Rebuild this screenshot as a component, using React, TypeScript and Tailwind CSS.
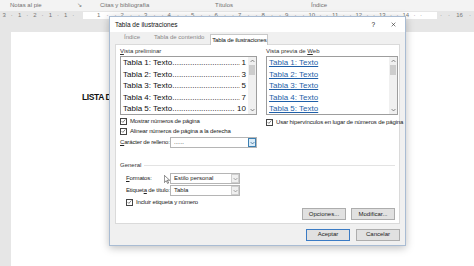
const font = "font-['Liberation_Sans',sans-serif]";

const Check = () => (
  <span className="flex h-[7px] w-[7px] shrink-0 items-center justify-center border border-[#444] bg-white">
    <svg viewBox="0 0 8 8" className="h-[6px] w-[6px]">
      <path d="M1 4.2 3 6.2 7 1.5" fill="none" stroke="#222" strokeWidth="0.9" />
    </svg>
  </span>
);

const CheckRow = ({ label }: { label: string }) => (
  <div className="flex h-[10px] items-center gap-[3px] whitespace-nowrap text-[6px] tracking-[-0.15px] text-[#222]">
    <Check />
    <span>{label}</span>
  </div>
);

const Chevron = ({ down, color = '#606060' }: { down?: boolean; color?: string }) => (
  <svg viewBox="0 0 8 6" className="h-[4px] w-[5px]">
    <path
      d={down ? 'M1 1.5 4 4.5 7 1.5' : 'M1 4.5 4 1.5 7 4.5'}
      fill="none"
      stroke={color}
      strokeWidth="1.2"
    />
  </svg>
);

const Scroll = () => (
  <div className="flex w-[8px] shrink-0 flex-col items-center bg-[#f0f0f0] pt-[2px] pb-[2px]">
    <Chevron />
    <div className="mt-[2px] h-[10px] w-[6px] bg-[#cdcdcd]" />
    <div className="flex-1" />
    <Chevron down />
  </div>
);

const Select = ({
  value,
  width,
  active,
}: {
  value: string;
  width: string;
  active?: boolean;
}) => (
  <div className={`flex h-[11px] items-stretch border border-[#b5b5b5] bg-white ${width}`}>
    <span className="flex-1 whitespace-nowrap pl-[3px] text-[6px] leading-[9px] text-[#222]">
      {value}
    </span>
    <span
      className={`flex w-[8px] items-center justify-center border ${
        active ? 'border-[#3c7fb1] bg-[#dbecf8]' : 'border-[#cfcfcf] bg-[#f0f0f0]'
      }`}
    >
      <Chevron down color={active ? '#2c5f8a' : '#8a8a8a'} />
    </span>
  </div>
);

const Btn = ({ label, primary }: { label: string; primary?: boolean }) => (
  <div
    className={`flex h-[12px] w-[44px] items-center justify-center whitespace-nowrap border bg-[#e1e1e1] text-[6px] text-[#222] ${
      primary ? 'border-[#3b7bc4]' : 'border-[#adadad]'
    }`}
  >
    {label}
  </div>
);

const rows = [
  ['Tabla 1: Texto', '1'],
  ['Tabla 2: Texto', '3'],
  ['Tabla 3: Texto', '5'],
  ['Tabla 4: Texto', '7'],
  ['Tabla 5: Texto', '10'],
];

const rulerNums = ['1', '2', '3', '4', '5', '6', '7', '8', '9', '10', '11', '12', '13', '14'];

export default function App() {
  return (
    <div className={`relative h-[266px] w-[474px] overflow-hidden bg-white ${font}`}>
      {/* ribbon group labels */}
      <div className="flex h-[11px] items-center whitespace-nowrap bg-[#f3f3f3] text-[6px] text-[#707070]">
        <span className="w-[100px] pl-[10px]">
          Notas al pie <span className="ml-[34px]">↘</span>
        </span>
        <span className="w-[115px]">Citas y bibliografía</span>
        <span className="w-[96px]">Títulos</span>
        <span>Índice</span>
      </div>

      {/* ruler */}
      <div className="flex h-[9px] items-center bg-[#e6e6e6] text-[6px] text-[#777]">
        <div className="flex w-[83px] justify-around pr-[6px]">
          <span>3</span><span>·</span><span>1</span><span>·</span><span>2</span><span>·</span>
          <span>1</span><span>·</span><span>1</span><span>·</span>
        </div>
        <div className="flex h-[7px] w-[354px] items-center bg-white pl-[14px]">
          {rulerNums.map((n) => (
            <span key={n} className="flex w-[23.5px] justify-between pr-[4px]">
              <span>{n}</span>
              <span>·</span>
              <span>·</span>
            </span>
          ))}
        </div>
        <div className="flex flex-1 justify-around">
          <span>·</span><span>·</span><span>16</span><span>·</span>
        </div>
      </div>

      <div className="h-[12px] bg-[#e6e6e6]" />

      {/* page */}
      <div className="flex h-[234px]">
        <div className="w-[11px] bg-[#e6e6e6]" />
        <div className="flex-1 bg-white pl-[71px] pt-[60px]">
          <div className="whitespace-nowrap text-[8.5px] font-bold leading-[10px] tracking-[-0.4px] text-[#111]">
            LISTA DE
          </div>
        </div>
      </div>

      {/* dialog */}
      <div className="absolute left-[109px] top-[16px] flex h-[230px] w-[297px] flex-col border border-[#a9bcd3] bg-[#f0f0f0] shadow-[0_2px_8px_rgba(0,0,0,0.25)]">
        <div className="flex h-[15px] items-center bg-white pl-[5px] pr-[9px] text-[6.5px] text-[#111]">
          <span className="flex-1">Tabla de ilustraciones</span>
          <span className="mr-[16px]">?</span>
          <svg viewBox="0 0 8 8" className="h-[5px] w-[5px]">
            <path d="M1 1 7 7M7 1 1 7" stroke="#222" strokeWidth="0.9" />
          </svg>
        </div>

        <div className="flex flex-1 flex-col px-[5px] pt-[2px]">
          {/* tabs */}
          <div className="flex h-[10px] items-end whitespace-nowrap text-[6px] text-[#888]">
            <span className="mb-[2px] ml-[9px]">Índice</span>
            <span className="mb-[2px] ml-[14px]">Tabla de contenido</span>
            <span className="relative top-[1px] ml-[6px] flex h-[11px] w-[58px] items-center justify-center border border-b-0 border-[#c8c8c8] bg-white tracking-[-0.15px] text-[#111]">
              Tabla de ilustraciones
            </span>
          </div>

          {/* panel */}
          <div className="flex h-[180px] flex-col border border-[#dadada] bg-white px-[4px] pt-[3px]">
            <div className="flex">
              {/* print preview */}
              <div className="flex w-[137px] flex-col">
                <span className="mb-[1px] text-[6px] leading-[7px] text-[#333]">
                  <span className="underline">V</span>ista preliminar
                </span>
                <div className="flex h-[59px] border border-[#9d9d9d]">
                  <div className="flex min-w-0 flex-1 flex-col pl-[2px] pr-[2px] text-[8px] leading-[11.5px] text-[#111]">
                    {rows.map(([t, n]) => (
                      <div key={t} className="flex whitespace-nowrap">
                        <span>{t}</span>
                        <span className="min-w-0 flex-1 overflow-hidden">
                          ..................................................
                        </span>
                        <span className="pl-[2px]">{n}</span>
                      </div>
                    ))}
                  </div>
                  <Scroll />
                </div>
                <div className="mt-[1px]">
                  <CheckRow label="Mostrar números de página" />
                  <CheckRow label="Alinear números de página a la derecha" />
                </div>
                <div className="mt-[1px] flex items-center">
                  <span className="w-[50px] whitespace-nowrap text-[6px] tracking-[-0.15px] text-[#222]">
                    <span className="underline">C</span>arácter de relleno:
                  </span>
                  <Select value="......" width="w-[87px]" active />
                </div>
              </div>

              <div className="mx-[4px] mt-[4px] h-[108px] w-px bg-[#d5d5d5]" />

              {/* web preview */}
              <div className="ml-[1px] flex w-[132px] flex-col">
                <span className="mb-[1px] text-[6px] leading-[7px] text-[#333]">
                  Vista previa de <span className="underline">W</span>eb
                </span>
                <div className="flex h-[59px] border border-[#9d9d9d]">
                  <div className="flex flex-1 flex-col pl-[2px] text-[8px] leading-[11.5px] text-[#1f5fa8]">
                    {rows.map(([t]) => (
                      <span key={t} className="whitespace-nowrap underline">
                        {t}
                      </span>
                    ))}
                  </div>
                  <Scroll />
                </div>
                <div className="mt-[2px]">
                  <CheckRow label="Usar hipervínculos en lugar de números de página" />
                </div>
              </div>
            </div>

            {/* general */}
            <div className="mt-[1px] flex items-center gap-[3px]">
              <span className="text-[6px] text-[#333]">General</span>
              <div className="h-px flex-1 bg-[#e3e3e3]" />
            </div>
            <div className="relative mt-[3px] flex flex-col gap-[1px] pl-[6px]">
              <div className="flex items-center">
                <span className="w-[44px] whitespace-nowrap text-[6px] tracking-[-0.15px] text-[#222]">
                  <span className="underline">F</span>ormatos:
                </span>
                <Select value="Estilo personal" width="w-[70px]" />
              </div>
              <div className="flex items-center">
                <span className="w-[44px] whitespace-nowrap text-[6px] tracking-[-0.15px] text-[#222]">
                  Etiquet<span className="underline">a</span> de título:
                </span>
                <Select value="Tabla" width="w-[70px]" />
              </div>
              <CheckRow label="Incluir etiqueta y número" />
              {/* mouse pointer */}
              <svg viewBox="0 0 8 12" className="absolute left-[44px] top-[2px] h-[9px] w-[6px]">
                <path
                  d="M0.5 0.5V10L3 7.6 4.8 11.3 6.2 10.6 4.4 7H7.6Z"
                  fill="#fff"
                  stroke="#222"
                  strokeWidth="0.7"
                />
              </svg>
            </div>
            <div className="mt-[1px] flex justify-end gap-[5px]">
              <Btn label="Opciones..." />
              <Btn label="Modificar..." />
            </div>
          </div>

          {/* footer */}
          <div className="flex flex-1 items-center justify-end gap-[6px]">
            <Btn label="Aceptar" primary />
            <Btn label="Cancelar" />
          </div>
        </div>
      </div>
    </div>
  );
}
